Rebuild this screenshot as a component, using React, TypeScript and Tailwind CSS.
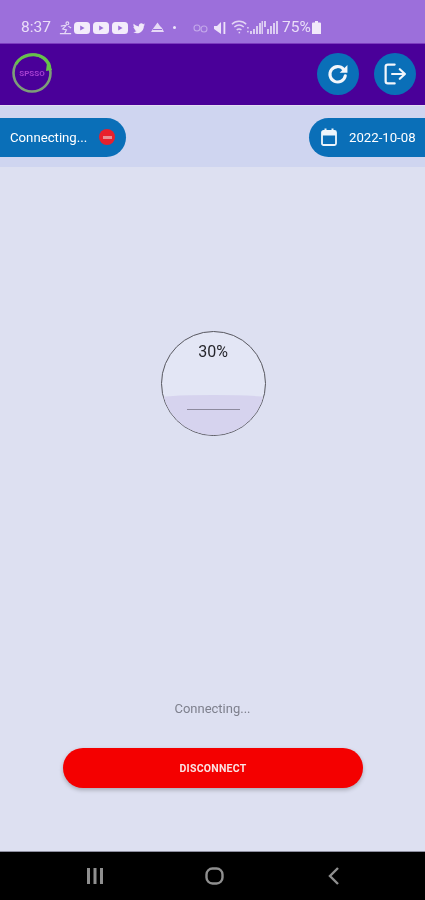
import React from "react";

const YT = () => (
  <svg width="16" height="12" viewBox="0 0 16 12">
    <rect x="0" y="0" width="16" height="12" rx="3.5" fill="#f3ecfb" />
    <path d="M6.2 3.6 L10.6 6 L6.2 8.4 Z" fill="#9c6fdb" />
  </svg>
);

const StatusBar = () => (
  <div className="h-[43px] bg-[#9c6fdb] flex items-center pl-[21px] pt-[12px] text-[#eadff8] [font-family:Roboto,sans-serif] blur-[0.5px]">
    <span className="text-[15.5px] w-[36px] leading-none">8:37</span>
    <svg width="15" height="16" viewBox="0 0 16 16" fill="none" stroke="#e6daf6" strokeWidth="1.2" className="ml-[1px]">
      <circle cx="10" cy="3" r="1.5" />
      <path d="M9 5 L5 9 L9 10 L7 14 M2 14 H14 M11 6 L14 8 M8 5 L3 6" />
    </svg>
    <div className="flex gap-[3px] ml-[1px]">
      <YT />
      <YT />
      <YT />
    </div>
    <svg width="16" height="14" viewBox="0 0 24 24" fill="#f1e9fa" className="ml-[3px]">
      <path d="M22.46 6c-.77.35-1.6.58-2.46.69.88-.53 1.56-1.37 1.88-2.38-.83.5-1.75.85-2.72 1.05C18.37 4.5 17.26 4 16 4c-2.35 0-4.27 1.92-4.27 4.29 0 .34.04.67.11.98C8.28 9.09 5.11 7.38 3 4.79c-.37.63-.58 1.37-.58 2.15 0 1.49.75 2.81 1.91 3.56-.71 0-1.37-.2-1.95-.5v.03c0 2.08 1.48 3.82 3.44 4.21a4.22 4.22 0 0 1-1.93.07 4.28 4.28 0 0 0 4 2.98 8.521 8.521 0 0 1-5.33 1.84c-.34 0-.68-.02-1.02-.06C3.44 20.29 5.7 21 8.12 21 16 21 20.33 14.46 20.33 8.79c0-.19 0-.37-.01-.56.84-.6 1.56-1.36 2.14-2.23z" />
    </svg>
    <svg width="13" height="11" viewBox="0 0 13 11" fill="#e6daf6" className="ml-[4px]">
      <path d="M6.5 0.5 L9 4 L11 6 L13 10 H0 L2.5 6 L4 4 Z" />
      <rect x="2" y="7" width="9" height="1" fill="#9c6fdb" />
    </svg>
    <span className="w-[3px] h-[3px] rounded-full bg-[#efe6fa] ml-[9px]" />
    <svg width="16" height="10" viewBox="0 0 16 10" fill="none" stroke="#c3a8ea" strokeWidth="1.1" className="ml-[17px]">
      <circle cx="4" cy="5" r="3" />
      <circle cx="11" cy="6" r="3" />
    </svg>
    <svg width="14" height="14" viewBox="0 0 14 14" fill="#ede3f9" className="ml-[4px]">
      <path d="M1 5 H4 L8 1 V13 L1 8 Z" />
      <rect x="10.500" y="1" width="1.800" height="12" />
    </svg>
    <svg width="19" height="15" viewBox="0 0 20 15" fill="none" stroke="#e3d5f5" strokeWidth="1.500" className="ml-[4px]">
      <path d="M1 4 C5 0 12 0 16 4 M3.5 7 C6.5 4.5 10.5 4.500 13.500 7 M6 10 C7.500 9 9.500 9 11 10" />
      <rect x="8" y="12" width="1.600" height="1.600" fill="#e3d5f5" stroke="none" />
      <rect x="17" y="7" width="1.600" height="1.600" fill="#e3d5f5" stroke="none" />
      <rect x="17" y="11" width="1.600" height="1.600" fill="#e3d5f5" stroke="none" />
    </svg>
    <svg width="13" height="13" viewBox="0 0 13 13" fill="#dccdf2">
      <rect x="0" y="10" width="2" height="3" />
      <rect x="3" y="8" width="2" height="5" />
      <rect x="6" y="5" width="2" height="8" />
      <rect x="9" y="2" width="2" height="11" />
      <rect x="11.500" y="0" width="1.500" height="13" />
    </svg>
    <svg width="14" height="13" viewBox="0 0 14 13" fill="#dccdf2" className="ml-[1px]">
      <rect x="0" y="0" width="2" height="6" />
      <rect x="3" y="8" width="2" height="5" />
      <rect x="6" y="5" width="2" height="8" />
      <rect x="9" y="2" width="2" height="11" />
      <rect x="12" y="0" width="2" height="13" />
    </svg>
    <span className="text-[15.5px] leading-none ml-[4px]">75%</span>
    <svg width="9" height="13" viewBox="0 0 9 13" fill="#f1e9fa" className="ml-[1px]">
      <path d="M3 0 H6 V1.5 H8 Q9 1.5 9 2.5 V13 H0 V2.5 Q0 1.5 1 1.5 H3 Z" />
    </svg>
  </div>
);

const AppBar = () => (
  <div className="h-[62px] bg-[#4a0099] border-t border-[#7d3cc0] flex items-center pl-[11px] pr-[9px]">
    <svg width="44" height="44" viewBox="0 0 44 44" fill="none" className="mb-[2px] blur-[0.5px]">
      <circle cx="21" cy="21" r="18.5" stroke="#7d9e78" strokeWidth="2.600" />
      <path d="M5 12 C10 3 24 0 33 6 C37 9 39 13 39 18" stroke="#66c24a" strokeWidth="3" />
      <path d="M36 11 L41 18 L35 19 Z" fill="#66c24a" />
      <text x="21" y="24" textAnchor="middle" fontSize="8" fill="#a63fd0" fontFamily="Roboto, sans-serif" fontWeight="700">SPSSO</text>
    </svg>
    <div className="ml-auto flex items-center gap-[15px] mt-[-2px]">
      <button className="w-[42px] h-[42px] rounded-full bg-[#0a6fb8] flex items-center justify-center">
        <svg width="24" height="24" viewBox="0 0 28 28" fill="none" stroke="#f2f6fb" strokeWidth="3.600" strokeLinecap="round">
          <path d="M20.5 8.5 A9 9 0 1 0 22.5 16" />
          <path d="M25 3.500 V12.500 H16 Z" fill="#f2f6fb" stroke="none" />
        </svg>
      </button>
      <button className="w-[42px] h-[42px] rounded-full bg-[#0a6fb8] flex items-center justify-center">
        <svg width="27" height="24" viewBox="0 0 30 28" fill="none" stroke="#f2f6fb" strokeWidth="2.600" strokeLinecap="round" strokeLinejoin="round">
          <path d="M14 3 H6 Q3.500 3 3.500 5.500 V22.500 Q3.500 25 6 25 H14" />
          <path d="M11 14 H26 M20 8.500 L26 14 L20 19.500" />
        </svg>
      </button>
    </div>
  </div>
);

const SubBar = () => (
  <div className="h-[62px] bg-[#cfd5f0] border-t border-[#e4dcf3] flex items-center justify-between [font-family:Roboto,sans-serif]">
    <div className="h-[39px] w-[126px] bg-[#0a6fb8] rounded-r-[20px] flex items-center pl-[10px] text-white text-[13.2px] mt-[1px]">
      <span className="w-[89px] whitespace-nowrap blur-[0.5px] pt-[1px]">Connecting...</span>
      <span className="w-[16px] h-[16px] rounded-full bg-[#e8202c] flex items-center justify-center blur-[0.4px]">
        <span className="w-[9px] h-[3px] bg-[#e98d92]" />
      </span>
    </div>
    <div className="h-[39px] w-[116px] bg-[#0a6fb8] rounded-l-[20px] flex items-center pl-[12px] text-white text-[13.2px] mt-[1px]">
      <svg width="16" height="18" viewBox="0 0 16 18" fill="none" className="shrink-0 blur-[0.3px]">
        <rect x="1" y="3" width="14" height="14" rx="1.500" stroke="#eef5fb" strokeWidth="1.800" />
        <rect x="1" y="3" width="14" height="4.500" fill="#eef5fb" />
        <rect x="3.500" y="0.500" width="2" height="3" fill="#eef5fb" />
        <rect x="10.500" y="0.500" width="2" height="3" fill="#eef5fb" />
      </svg>
      <span className="ml-[12px] whitespace-nowrap blur-[0.5px] pt-[1px]">2022-10-08</span>
    </div>
  </div>
);

const Gauge = () => (
  <div className="relative w-[105px] h-[105px] rounded-full border border-[#57575f] overflow-hidden bg-[#e3e6f5] [font-family:Roboto,sans-serif]">
    <div className="absolute left-[-10px] right-[-10px] bottom-0 h-[40px] bg-[#d6d3ee] rounded-t-[50%_4px]" />
    <div className="absolute left-[25px] w-[53px] top-[77px] h-px bg-[#8d8a9e]" />
    <div className="absolute inset-x-0 top-[10px] text-center text-[16px] leading-[20px] text-[#26262c] blur-[0.3px]">30%</div>
  </div>
);

const Main = () => (
  <div className="h-[684px] bg-[#dde0f1] flex flex-col items-center [font-family:Roboto,sans-serif]">
    <div className="mt-[164px] ml-[1px]">
      <Gauge />
    </div>
    <div className="mt-[265px] text-[13px] leading-[16px] text-[#7e808d] blur-[0.5px]">Connecting...</div>
    <button className="mt-[31px] ml-[1px] w-[300px] h-[40px] rounded-[20px] bg-[#f40000] text-[#fbe3e3] text-[10.500px] font-bold tracking-[0.25px] shadow-[0_2px_4px_rgba(0,0,0,0.25)] pt-[1px]">
      <span className="blur-[0.5px]">DISCONNECT</span>
    </button>
  </div>
);

const NavBar = () => (
  <div className="h-[49px] bg-black flex items-center border-t border-[#8e8fa0] pl-[87px]">
    <svg width="16" height="16" viewBox="0 0 16 16" fill="#8f8f8f" className="blur-[0.3px]">
      <rect x="0" y="0" width="3" height="16" />
      <rect x="6.500" y="0" width="3" height="16" />
      <rect x="13" y="0" width="3" height="16" />
    </svg>
    <svg width="19" height="18" viewBox="0 0 19 18" fill="none" stroke="#8f8f8f" strokeWidth="2.400" className="ml-[102px] blur-[0.3px]">
      <rect x="1.500" y="1.500" width="16" height="15" rx="6" />
    </svg>
    <svg width="11" height="18" viewBox="0 0 11 18" fill="none" stroke="#8f8f8f" strokeWidth="2.400" className="ml-[104px] blur-[0.3px]">
      <path d="M10 1 L2 9 L10 17" />
    </svg>
  </div>
);

export default function App() {
  return (
    <div className="w-[425px] h-[900px] overflow-hidden">
      <StatusBar />
      <AppBar />
      <SubBar />
      <Main />
      <NavBar />
    </div>
  );
}
